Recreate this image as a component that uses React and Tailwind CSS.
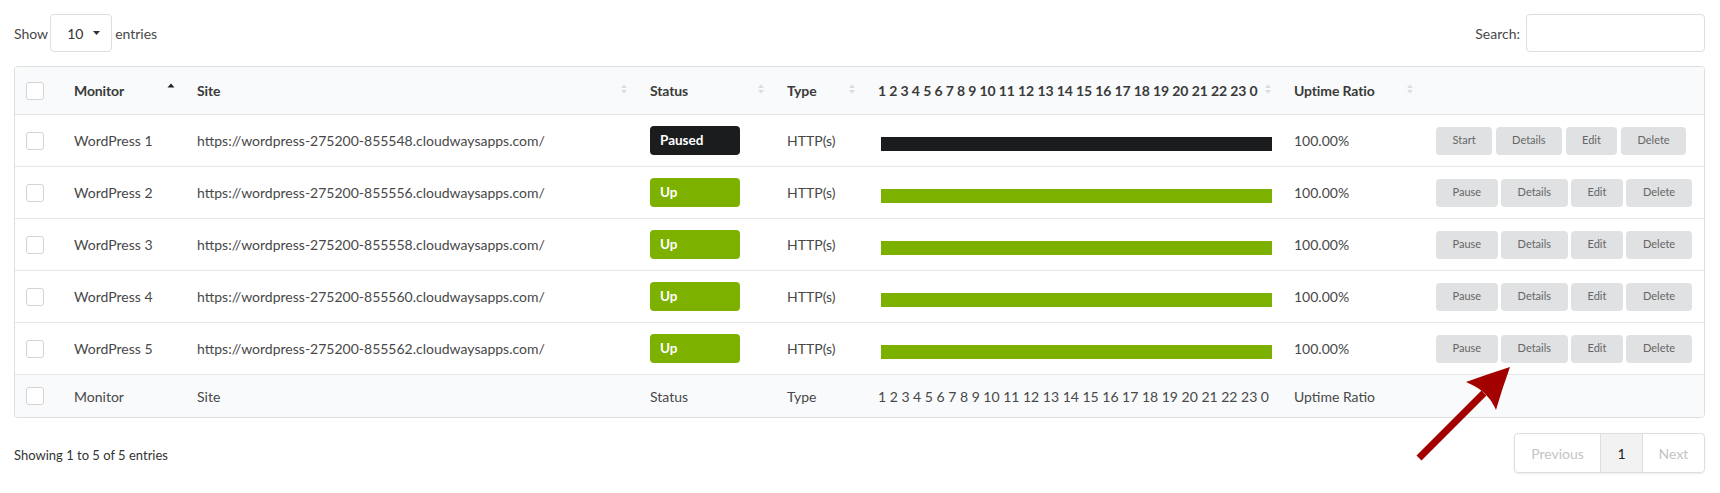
import React from "react";

const rows = [
  { name: "WordPress 1", url: "https://wordpress-275200-855548.cloudwaysapps.com/", status: "Paused" },
  { name: "WordPress 2", url: "https://wordpress-275200-855556.cloudwaysapps.com/", status: "Up" },
  { name: "WordPress 3", url: "https://wordpress-275200-855558.cloudwaysapps.com/", status: "Up" },
  { name: "WordPress 4", url: "https://wordpress-275200-855560.cloudwaysapps.com/", status: "Up" },
  { name: "WordPress 5", url: "https://wordpress-275200-855562.cloudwaysapps.com/", status: "Up" },
];

const hours = "1 2 3 4 5 6 7 8 9 10 11 12 13 14 15 16 17 18 19 20 21 22 23 0";

// datatables sort arrows
function SortIcon({ asc = false }) {
  if (asc) {
    return (
      <svg width="8" height="12" viewBox="0 0 8 12" className="shrink-0 -translate-y-[3px]">
        <path d="M0.5 5.5 L4 1.5 L7.5 5.5 Z" fill="#222" />
      </svg>
    );
  }
  return (
    <svg width="8" height="12" viewBox="0 0 8 12" className="shrink-0 -translate-y-[2px]">
      <path d="M1 5 L4 1.5 L7 5 Z" fill="#dcdcdc" />
      <path d="M1 7 L4 10.5 L7 7 Z" fill="#dcdcdc" />
    </svg>
  );
}

function Checkbox() {
  return <div className="w-[18px] h-[18px] rounded-[3px] border border-[#d4d4d5] bg-white" />;
}

function Th({ children, sort, asc, className = "" }) {
  return (
    <th className={`h-[48px] border-b border-[#e3e4e5] px-[11px] text-left font-bold text-[#3a3a3a] tracking-[-0.12px] ${className}`}>
      <div className="flex items-center justify-between whitespace-nowrap">
        <span>{children}</span>
        {sort && <SortIcon asc={asc} />}
      </div>
    </th>
  );
}

function ActionBtn({ children }) {
  return (
    <button className="h-[28px] px-[16.5px] rounded-[4px] bg-[#e0e1e2] text-[11px] text-[#666]">
      {children}
    </button>
  );
}

export default function App() {
  return (
    <div
      className="relative w-[1720px] h-[493px] bg-white pl-[14px] pr-[15px] pt-[14px] text-[14px] text-[#484848]"
      style={{ fontFamily: "Lato, 'Open Sans', Arial, sans-serif" }}
    >
      {/* top controls */}
      <div className="flex items-center justify-between h-[38px]">
        <div className="flex items-center">
          <span>Show</span>
          <div className="ml-[2px] mr-[3px] w-[62px] h-[38px] rounded-[4px] border border-[#dedede] flex items-center pl-[16px] gap-[10px] text-[#333]">
            <span>10</span>
            <svg width="7" height="4" viewBox="0 0 7 4">
              <path d="M0 0 L7 0 L3.5 4 Z" fill="#333" />
            </svg>
          </div>
          <span>entries</span>
        </div>
        <div className="flex items-center">
          <span>Search:</span>
          <input className="ml-[6px] w-[179px] h-[38px] rounded-[4px] border border-[#dedede] outline-none" />
        </div>
      </div>

      {/* table */}
      <div className="mt-[14px] border border-[#dedede] rounded-[4px] overflow-hidden">
        <table className="w-full table-fixed border-separate border-spacing-0">
          <colgroup>
            <col className="w-[48px]" />
            <col className="w-[123px]" />
            <col className="w-[453px]" />
            <col className="w-[137px]" />
            <col className="w-[91px]" />
            <col className="w-[416px]" />
            <col className="w-[142px]" />
            <col />
          </colgroup>
          <thead className="bg-[#f9fafb]">
            <tr>
              <th className="h-[48px] border-b border-[#e3e4e5] pl-[11px]">
                <Checkbox />
              </th>
              <Th sort asc>Monitor</Th>
              <Th sort>Site</Th>
              <Th sort>Status</Th>
              <Th sort>Type</Th>
              <Th sort>{hours}</Th>
              <Th sort>Uptime Ratio</Th>
              <th className="border-b border-[#e3e4e5]" />
            </tr>
          </thead>
          <tbody>
            {rows.map((r) => {
              const paused = r.status === "Paused";
              return (
                <tr key={r.name}>
                  <td className="h-[52px] border-b border-[#e6e6e6] pl-[11px]">
                    <Checkbox />
                  </td>
                  <td className="border-b border-[#e6e6e6] px-[11px] whitespace-nowrap">{r.name}</td>
                  <td className="border-b border-[#e6e6e6] px-[11px] whitespace-nowrap">{r.url}</td>
                  <td className="border-b border-[#e6e6e6] px-[11px]">
                    <div
                      className={`w-[90px] h-[29px] rounded-[4px] pl-[10px] flex items-center text-[13.5px] font-bold text-white ${
                        paused ? "bg-[#1b1c1d]" : "bg-[#7db100]"
                      }`}
                    >
                      {r.status}
                    </div>
                  </td>
                  <td className="border-b border-[#e6e6e6] px-[11px]">HTTP(s)</td>
                  <td className="border-b border-[#e6e6e6] pl-[14px] pr-[11px]">
                    <div className={`h-[14px] translate-y-[3px] ${paused ? "bg-[#1b1c1d]" : "bg-[#7db100]"}`} />
                  </td>
                  <td className="border-b border-[#e6e6e6] px-[11px]">100.00%</td>
                  <td className="border-b border-[#e6e6e6] px-[11px]">
                    <div className="flex gap-[3.5px]">
                      <ActionBtn>{paused ? "Start" : "Pause"}</ActionBtn>
                      <ActionBtn>Details</ActionBtn>
                      <ActionBtn>Edit</ActionBtn>
                      <ActionBtn>Delete</ActionBtn>
                    </div>
                  </td>
                </tr>
              );
            })}
          </tbody>
          <tfoot className="bg-[#f9fafb]">
            <tr>
              <td className="h-[42px] pl-[11px]">
                <Checkbox />
              </td>
              <td className="px-[11px]">Monitor</td>
              <td className="px-[11px]">Site</td>
              <td className="px-[11px]">Status</td>
              <td className="px-[11px]">Type</td>
              <td className="px-[11px] whitespace-nowrap">{hours}</td>
              <td className="px-[11px]">Uptime Ratio</td>
              <td />
            </tr>
          </tfoot>
        </table>
      </div>

      {/* bottom info + pagination */}
      <div className="mt-[15px] flex items-center justify-between">
        <span className="text-[13px] text-[#333] translate-y-[3px]">Showing 1 to 5 of 5 entries</span>
        <div className="flex h-[40px] rounded-[4px] border border-[#dedede] shadow-[0_1px_2px_rgba(0,0,0,0.08)] overflow-hidden">
          <div className="w-[85px] flex items-center justify-center text-[#c4c4c4]">Previous</div>
          <div className="w-[43px] flex items-center justify-center bg-[#f2f2f2] border-x border-[#dedede] text-[#222]">1</div>
          <div className="w-[61px] flex items-center justify-center text-[#c4c4c4]">Next</div>
        </div>
      </div>

      {/* red annotation arrow */}
      <svg className="absolute left-0 top-0 pointer-events-none" width="1720" height="493">
        <line x1="1419" y1="458" x2="1484" y2="393" stroke="#a30000" strokeWidth="7" />
        <path d="M1510 367 Q1488 374 1466 382 Q1482 389 1487 396 Q1492 401 1496 410 Q1502 389 1510 367 Z" fill="#a30000" />
      </svg>
    </div>
  );
}
